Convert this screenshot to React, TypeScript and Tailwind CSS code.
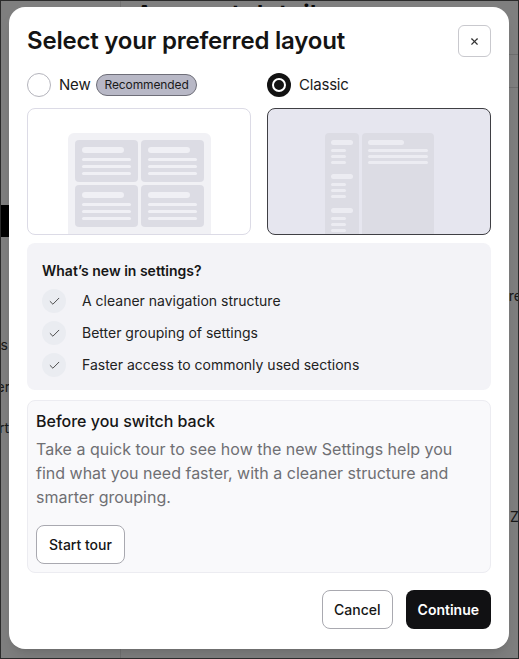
import { Check, X } from "lucide-react";

function NewPreview() {
  const tile = (
    <div className="rounded bg-[#dcdce4] px-[7px] pt-[7px]">
      <div className="h-[6px] w-[42px] rounded-full bg-[#f0f0f5]" />
      <div className="mt-[5px] h-[3px] w-[49px] rounded-full bg-[#f0f0f5]" />
      <div className="mt-[4px] h-[3px] w-[49px] rounded-full bg-[#f0f0f5]" />
      <div className="mt-[4px] h-[3px] w-[49px] rounded-full bg-[#f0f0f5]" />
    </div>
  );
  return (
    <div className="mx-auto mt-6 grid h-[110px] w-[143px] grid-cols-2 grid-rows-[42px_42px] gap-[3px] rounded-md bg-[#f1f1f5] p-[7px]">
      {tile}
      {tile}
      {tile}
      {tile}
    </div>
  );
}

function ClassicPreview() {
  const group = (
    <div className="mb-[10px]">
      <div className="h-[5px] w-[22px] rounded-full bg-[#ececf2]" />
      <div className="mt-[4px] h-[3px] w-[15px] rounded-full bg-[#ececf2]" />
      <div className="mt-[3px] h-[3px] w-[15px] rounded-full bg-[#ececf2]" />
      <div className="mt-[3px] h-[3px] w-[15px] rounded-full bg-[#ececf2]" />
    </div>
  );
  return (
    <div className="mx-auto mt-6 flex h-[110px] w-[109px] gap-[3px]">
      <div className="w-[34px] rounded bg-[#dcdce4] px-[6px] pt-[7px]">
        {group}
        {group}
        {group}
      </div>
      <div className="flex-1 rounded bg-[#dcdce4] px-[6px] pt-[7px]">
        <div className="h-[5px] w-[36px] rounded-full bg-[#ececf2]" />
        <div className="mt-[4px] h-[3px] w-[60px] rounded-full bg-[#ececf2]" />
        <div className="mt-[3px] h-[3px] w-[60px] rounded-full bg-[#ececf2]" />
        <div className="mt-[3px] h-[3px] w-[60px] rounded-full bg-[#ececf2]" />
      </div>
    </div>
  );
}

const features = [
  "A cleaner navigation structure",
  "Better grouping of settings",
  "Faster access to commonly used sections",
];

export default function App() {
  return (
    <div className="relative h-[659px] w-[519px] overflow-hidden border border-[#2b2b2b] bg-white font-['Inter',sans-serif]">
      {/* page behind the modal */}
      <div className="flex h-full">
        <div className="w-[120px] shrink-0 border-r border-[#e5e5e5] pt-[204px]">
          <div className="h-8 bg-black" />
          <div className="mt-[98px] flex justify-end whitespace-nowrap pr-[112px] text-sm text-[#333]">
            Settings
          </div>
          <div className="mt-[22px] flex justify-end whitespace-nowrap pr-[110px] text-sm text-[#333]">
            Member
          </div>
          <div className="mt-[21px] flex justify-end whitespace-nowrap pr-[111px] text-sm text-[#333]">
            Start
          </div>
        </div>
        <div className="flex-1">
          <div className="-mt-[6px] pl-[14px] text-[26px] font-semibold text-[#111]">
            Account details
          </div>
          <div className="mt-5 border-b border-[#ddd]" />
          <div className="mt-8 border-b border-[#ddd]" />
          <div className="mt-[198px] whitespace-nowrap pl-[366px] text-sm text-[#333]">Store</div>
          <div className="mt-[201px] whitespace-nowrap pl-[389px] text-sm text-[#333]">Zone</div>
        </div>
      </div>
      <div className="absolute inset-0 bg-black/50" />

      {/* modal */}
      <div className="absolute left-[8px] top-[6px] flex h-[642px] w-[500px] flex-col rounded-2xl bg-white px-[18px] pb-5 pt-[18px] shadow-lg">
        <div className="flex items-center justify-between">
          <h2 className="text-[24px] font-semibold leading-8 tracking-[-0.2px] text-[#141414]">
            Select your preferred layout
          </h2>
          <button className="flex h-8 w-[33px] items-center justify-center rounded-md border border-[#c9c9ce] text-[#333]">
            <X size={11} strokeWidth={2.5} />
          </button>
        </div>

        <div className="mt-4 grid grid-cols-2 gap-4">
          <div className="flex h-6 items-center">
            <span className="h-6 w-6 rounded-full border border-[#b4b4bc] bg-white" />
            <span className="ml-2 text-[15px] tracking-[-0.2px] text-[#1a1a1a]">New</span>
            <span className="ml-[6px] rounded-full border border-[#6e6e78] bg-[#b8b8c6] px-[7px] py-[2px] text-[12px] leading-4 tracking-[-0.1px] text-[#1a1a1a]">
              Recommended
            </span>
          </div>
          <div className="flex h-6 items-center">
            <span className="flex h-6 w-6 items-center justify-center rounded-full bg-[#121212]">
              <span className="h-[14px] w-[14px] rounded-full border-2 border-white bg-[#121212]" />
            </span>
            <span className="ml-2 text-[15px] tracking-[-0.2px] text-[#1a1a1a]">Classic</span>
          </div>
        </div>

        <div className="mt-[11px] grid grid-cols-2 gap-4">
          <div className="h-[127px] overflow-hidden rounded-lg border border-[#dcdbe6] bg-white">
            <NewPreview />
          </div>
          <div className="h-[127px] overflow-hidden rounded-lg border-[1.5px] border-[#3f3f44] bg-[#e6e6ef]">
            <ClassicPreview />
          </div>
        </div>

        <div className="mt-2 rounded-lg bg-[#f3f3f7] px-[15px] pb-[13px] pt-[18px]">
          <h3 className="text-[14px] font-semibold leading-5 text-[#161616]">
            What’s new in settings?
          </h3>
          <ul className="mt-2 flex flex-col gap-2">
            {features.map((f) => (
              <li key={f} className="flex items-center">
                <span className="flex h-6 w-6 items-center justify-center rounded-full bg-[#eaecf1] text-[#444]">
                  <Check size={13} strokeWidth={1.75} />
                </span>
                <span className="ml-4 text-[14px] leading-6 text-[#222]">{f}</span>
              </li>
            ))}
          </ul>
        </div>

        <div className="mt-[10px] rounded-lg border border-[#ececf1] bg-[#f9f9fb] px-2 pb-2 pt-2">
          <h3 className="text-[16px] font-medium leading-6 text-[#161616]">
            Before you switch back
          </h3>
          <p className="mt-[4px] text-[16px] leading-6 text-[#6f6f73]">
            Take a quick tour to see how the new Settings help you find what you
            need faster, with a cleaner structure and smarter grouping.
          </p>
          <button className="mt-[16px] h-[39px] rounded-lg border border-[#a9a9b0] bg-white px-3 text-[14px] font-medium text-[#161616]">
            Start tour
          </button>
        </div>

        <div className="mt-auto flex justify-end gap-[13px]">
          <button className="h-[39px] rounded-lg border border-[#a9a9b0] bg-white px-[11px] text-[14px] font-medium text-[#161616]">
            Cancel
          </button>
          <button className="h-[39px] rounded-lg bg-[#111113] px-[12px] text-[14px] font-semibold text-white">
            Continue
          </button>
        </div>
      </div>
    </div>
  );
}
